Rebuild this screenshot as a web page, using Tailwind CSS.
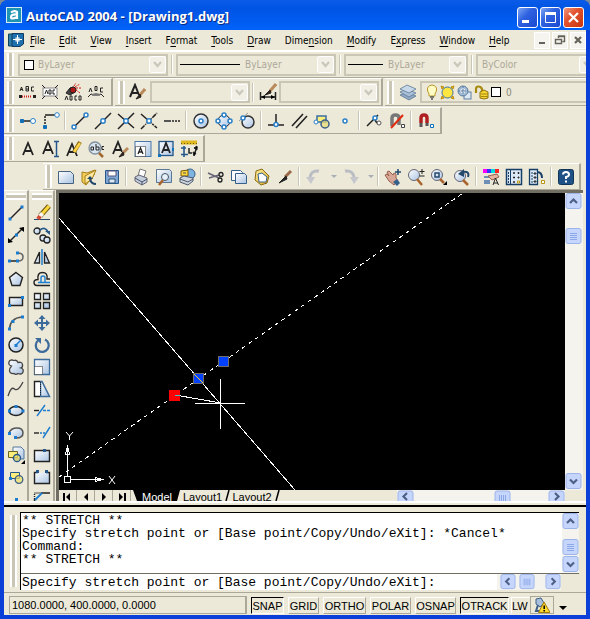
<!DOCTYPE html>
<html lang="en">

<head>
    <meta charset="UTF-8">
    <meta name="viewport" content="width=device-width, initial-scale=1.0">
    <script src="https://cdn.jsdelivr.net/npm/@tailwindcss/browser@4"></script>
    <title>AutoCAD 2004 - [Drawing1.dwg]</title>
</head>

<body class="h-screen bg-[#7a8a9a] overflow-hidden font-['DejaVu_Sans_Condensed','DejaVu_Sans',sans-serif] text-[10px] text-black">
    <!-- shared gradients -->
    <svg class="absolute size-0" aria-hidden="true">
        <defs>
            <linearGradient id="pane" x1="0" y1="0" x2="1" y2="1">
                <stop offset="0" stop-color="#fff" />
                <stop offset="1" stop-color="#a9c3e2" />
            </linearGradient>
            <linearGradient id="gold" x1="0" y1="0" x2="1" y2="1">
                <stop offset="0" stop-color="#fff3a0" />
                <stop offset="1" stop-color="#d9a51c" />
            </linearGradient>
        </defs>
    </svg>

    <div class="h-full flex flex-col rounded-t-lg overflow-hidden bg-[#0a3fd8]">
        <!-- title bar -->
        <header class="h-[30px] shrink-0 flex items-center pl-[6px] pr-[6px] bg-linear-to-b from-[#0a5be8] from-0% via-[#0054e3] via-30% to-[#0062fa]">
            <svg class="size-4 shrink-0" viewBox="0 0 16 16">
                <rect x=".5" y=".5" width="15" height="15" fill="#1f93b4" stroke="#d8eef5" />
                <path d="M5 5.5Q8 3 11 5v7M11 7.5Q5 7 5 10T11 10" fill="none" stroke="#fff" stroke-width="2.2" />
            </svg>
            <h1 class="flex-1 pl-1 pt-[3px] text-[13px] font-bold text-white whitespace-nowrap font-['Open_Sans',sans-serif] [text-shadow:1px_1px_#0a2a80]">AutoCAD 2004 - [Drawing1.dwg]</h1>
            <div class="flex gap-[2px] mt-1 [&>button]:size-[21px] [&>button]:rounded-[3px] [&>button]:border [&>button]:border-white">
                <button aria-label="Minimize" class="bg-linear-to-br from-[#7ea4f4] via-[#2f62e0] via-40% to-[#1a48d0]"><svg viewBox="0 0 19 19"><path d="M4 13.5h7" stroke="#fff" stroke-width="3" /></svg></button>
                <button aria-label="Maximize" class="bg-linear-to-br from-[#7ea4f4] via-[#2f62e0] via-40% to-[#1a48d0]"><svg viewBox="0 0 19 19"><path d="M4.500 5v9.500h10V5" stroke="#fff" fill="none" /><path d="M4 5.500h11" stroke="#fff" stroke-width="3" /></svg></button>
                <button aria-label="Close" class="bg-linear-to-br from-[#f0967c] via-[#e2532e] via-40% to-[#c9340e]"><svg viewBox="0 0 19 19"><path d="M5 5l9 9M14 5l-9 9" stroke="#fff" stroke-width="2.2" /></svg></button>
            </div>
        </header>

        <div class="flex-1 min-h-0 mx-1 mb-1 flex flex-col bg-[#ece9d8]">
            <!-- menu -->
            <nav class="h-5 shrink-0 flex items-center pl-1">
                <svg class="size-4 shrink-0 mr-[6px]" viewBox="0 0 16 16">
                    <path d="M.5 2h4v12h-4z" fill="#2d7fa8" stroke="#11405c" />
                    <path d="M4 1.500h11.500V12L12 14.500H4z" fill="#1d6fae" stroke="#123b63" />
                    <path d="M9.500 3v9M5 7.500h9" stroke="#fff" /><rect x="8" y="6" width="3" height="3" fill="none" stroke="#fff" />
                </svg>
                <div class="flex gap-[14px] [&_u]:underline-offset-2 whitespace-nowrap">
                    <a href="#"><u>F</u>ile</a><a href="#"><u>E</u>dit</a><a href="#"><u>V</u>iew</a><a href="#"><u>I</u>nsert</a><a href="#">F<u>o</u>rmat</a><a href="#"><u>T</u>ools</a><a href="#"><u>D</u>raw</a><a href="#">Dime<u>n</u>sion</a><a href="#"><u>M</u>odify</a><a href="#">E<u>x</u>press</a><a href="#"><u>W</u>indow</a><a href="#"><u>H</u>elp</a>
                </div>
                <div class="ml-auto flex gap-[2px] [&>button]:w-4 [&>button]:h-[17px] [&>button]:bg-[#f5f4ee] [&>button]:border [&>button]:border-[#fff] [&_svg]:size-[14px] stroke-[#66645a] fill-none">
                    <button aria-label="Minimize drawing"><svg viewBox="0 0 14 14"><path d="M4 10h6" stroke-width="2" /></svg></button>
                    <button aria-label="Restore drawing"><svg viewBox="0 0 14 14"><path d="M5.500 5V3.500h6v5H9.500M2.500 6.500h6v4h-6zM5 3h7M2 6.500h7" stroke-width="1.400" /></svg></button>
                    <button aria-label="Close drawing"><svg viewBox="0 0 14 14"><path d="M4 4l6 6M10 4l-6 6" stroke-width="2.200" /></svg></button>
                </div>
            </nav>

            <!-- properties row -->
            <div class="h-[28px] shrink-0 flex items-center gap-[3px] pl-[3px] border-t-2 border-t-white overflow-hidden text-[#aca899] border-b border-b-[#aca899]">
                <i class="w-[7px] h-[23px] shrink-0 border-x-2 border-[#fff] bg-[#c9c6b6] mr-[1px]"></i>
                <label class="w-[150px] h-[22px] shrink-0 flex items-center pl-1 border-2 border-[#c9c6b6]">
                    <span class="size-[10px] bg-white border border-black"></span>
                    <select aria-label="Color" disabled class="flex-1 min-w-0 appearance-none pl-1 text-[#aca899]"><option>ByLayer</option></select>
                    <svg class="size-[17px]" viewBox="0 0 17 17"><rect x=".5" y=".5" width="16" height="16" rx="2" fill="#f2f0e6" stroke="#fff" /><path d="M5 6l3.500 4L12 6" fill="none" stroke="#c9c7ba" stroke-width="2.200" /></svg>
                </label>
                <i class="w-[2px] h-[19px] shrink-0 border-l border-[#c9c6b6] bg-white"></i>
                <label class="w-[160px] h-[22px] shrink-0 flex items-center pl-[2px] border-2 border-[#c9c6b6]">
                    <span class="w-[60px] h-px bg-black"></span>
                    <select aria-label="Linetype" disabled class="flex-1 min-w-0 appearance-none pl-[5px] text-[#aca899]"><option>ByLayer</option></select>
                    <svg class="size-[17px]" viewBox="0 0 17 17"><rect x=".5" y=".5" width="16" height="16" rx="2" fill="#f2f0e6" stroke="#fff" /><path d="M5 6l3.500 4L12 6" fill="none" stroke="#c9c7ba" stroke-width="2.200" /></svg>
                </label>
                <i class="w-[2px] h-[19px] shrink-0 border-l border-[#c9c6b6] bg-white"></i>
                <label class="w-[124px] h-[22px] shrink-0 flex items-center pl-[2px] border-2 border-[#c9c6b6]">
                    <span class="w-[35px] h-px bg-black"></span>
                    <select aria-label="Lineweight" disabled class="flex-1 min-w-0 appearance-none pl-[5px] text-[#aca899]"><option>ByLayer</option></select>
                    <svg class="size-[17px]" viewBox="0 0 17 17"><rect x=".5" y=".5" width="16" height="16" rx="2" fill="#f2f0e6" stroke="#fff" /><path d="M5 6l3.500 4L12 6" fill="none" stroke="#c9c7ba" stroke-width="2.200" /></svg>
                </label>
                <i class="w-[2px] h-[19px] shrink-0 border-l border-[#c9c6b6] bg-white"></i>
                <label class="w-[122px] h-[22px] shrink-0 flex items-center pl-1 border-2 border-[#c9c6b6]">
                    <select aria-label="Plot style" disabled class="flex-1 min-w-0 appearance-none text-[#aca899]"><option>ByColor</option></select>
                    <svg class="size-[17px]" viewBox="0 0 17 17"><rect x=".5" y=".5" width="16" height="16" rx="2" fill="#f2f0e6" stroke="#fff" /><path d="M5 6l3.500 4L12 6" fill="none" stroke="#c9c7ba" stroke-width="2.200" /></svg>
                </label>
            </div>

            <!-- text, styles and layers row -->
            <div class="h-[28px] shrink-0 flex overflow-hidden [&_button]:w-[23px] [&_button]:h-[22px] [&_button]:shrink-0 [&_button]:grid [&_button]:place-items-center [&_button>svg]:size-[18px] fill-none stroke-[#222]">
                <div class="w-[109px] shrink-0 flex items-center pl-[3px] border-t border-t-white border-r-2 border-b border-[#aca899]">
                    <i class="w-[7px] h-[23px] border-x-2 border-[#fff] bg-[#c9c6b6] mr-[1px]"></i>
                    <button aria-label="Arc aligned text"><svg viewBox="0 0 18 18"><path d="M2 8l1.500-4L5 8M8 3.500v4.500h2.500V3.500zM8 6h2M16 4h-2.500v4H16M2.500 6.500h2" /><path d="M4 13.500h10" stroke="#d02020" stroke-width="2" stroke-dasharray="1 1" /><path d="M1 13.500h3M15 13.500h3" stroke-width="3" /></svg></button>
                    <button aria-label="Text mask"><svg viewBox="0 0 18 18"><rect x="2" y="5" width="14" height="8" fill="#fff" stroke="#888" /><path d="M1 2l3 3M17 2l-3 3M1 16l3-3M17 16l-3-3M4 11l1.500-4L7 11M8 7v4h2V7zM14 7h-2v4h2" /></svg></button>
                    <button aria-label="Explode text"><svg viewBox="0 0 18 18"><path d="M2 10l4-5 4-1 1 5-5 3z" fill="#444" /><circle cx="9" cy="7" r="3" fill="#b01818" /><path d="M11 4l5-3M12 5l5 0M12 7l4 3M10 3l2-3" stroke="#d42010" stroke-dasharray="2 1" /><path d="M1 17l1.500-4L4 17M6 13v4h2v-4zM13 13h-2v4h2M15 13v4h2v-4z" /></svg></button>
                    <button aria-label="Text fit"><svg viewBox="0 0 18 18"><path d="M2 9l1.500-4L5 9M8 3.500v4h2v-4zM16 5h-2.500v4H16M1 14l3-3 3 1h4l3-1 3 3" /><path d="M5 12l4-1 4 1" stroke="#777" stroke-width="2" /></svg></button>
                </div>
                <div class="w-[268px] shrink-0 ml-[2px] flex items-center pl-[3px] border-t border-t-white border-r-2 border-b border-[#aca899]">
                    <i class="w-[7px] h-[23px] shrink-0 border-x-2 border-[#fff] bg-[#c9c6b6]"></i>
                    <button aria-label="Text style"><svg viewBox="0 0 18 18"><path d="M2 14L7 2l4 10M4 10h6" stroke-width="2" /><path d="M17 6l-5 6" stroke="#b98a5a" stroke-width="3" /><path d="M12 11l-4 5 5-2z" fill="#3a2010" /></svg></button>
                    <label class="w-[100px] h-[22px] shrink-0 ml-[2px] flex items-center justify-end border-2 border-[#c9c6b6]">
                        <select aria-label="Text style name" disabled class="flex-1 min-w-0 appearance-none"></select>
                        <svg class="size-[17px]" viewBox="0 0 17 17"><rect x=".5" y=".5" width="16" height="16" rx="2" fill="#f2f0e6" stroke="#fff" /><path d="M5 6l3.500 4L12 6" stroke="#c9c7ba" stroke-width="2.200" /></svg>
                    </label>
                    <i class="w-[2px] h-[19px] shrink-0 mx-[2px] border-l border-[#c9c6b6] bg-white"></i>
                    <button aria-label="Dimension style"><svg viewBox="0 0 18 18"><path d="M1.500 9v8M16.500 9v8M2 14h14" stroke-width="1.500" /><path d="M2 14l4-2v4zM16 14l-4-2v4z" fill="#000" stroke="none" /><path d="M17 1l-6 7" stroke="#b98a5a" stroke-width="3" /><path d="M11 7l-5 5 6-2z" fill="#3a2010" /></svg></button>
                    <label class="w-[100px] h-[22px] shrink-0 flex items-center justify-end border-2 border-[#c9c6b6]">
                        <select aria-label="Dimension style name" disabled class="flex-1 min-w-0 appearance-none"></select>
                        <svg class="size-[17px]" viewBox="0 0 17 17"><rect x=".5" y=".5" width="16" height="16" rx="2" fill="#f2f0e6" stroke="#fff" /><path d="M5 6l3.500 4L12 6" stroke="#c9c7ba" stroke-width="2.200" /></svg>
                    </label>
                </div>
                <div class="flex-1 ml-[2px] flex items-center pl-[2px] border-t border-t-white border-b border-[#aca899]">
                    <i class="w-[7px] h-[23px] shrink-0 border-x-2 border-[#fff] bg-[#c9c6b6] mr-[2px]"></i>
                    <button aria-label="Layers"><svg viewBox="0 0 18 18" stroke="#5d7896" stroke-width=".8"><path d="M1 12l7-3 9 4-7 4z" fill="#8fa9c4" /><path d="M1 9l7-3 9 4-7 4z" fill="#a9c0d8" /><path d="M1 6l7-4 9 4-7 4z" fill="#c7d8e8" /></svg></button>
                    <div class="flex-1 h-[22px] ml-px flex items-center gap-[2px] pl-1 border-2 border-r-0 border-[#c9c6b6] text-[#8a877a]">
                        <svg class="w-[12px] h-4" viewBox="0 0 12 16"><path d="M3 10Q1 7 1.500 4 3 1 6 1t4.500 3Q11 7 9 10v2H3z" fill="#fffbc4" stroke="#b89a28" /><path d="M4 13h4M5 15h2" stroke="#555" stroke-width="1.500" /></svg>
                        <svg class="size-[15px]" viewBox="0 0 15 15"><path d="M1 1l3 1-2 2zM14 1l-3 1 2 2zM1 14l3-1-2-2zM14 14l-3-1 2-2z" fill="#e0b020" stroke="#c09010" /><circle cx="7.500" cy="7.500" r="5.500" fill="#ffe640" stroke="#3f6f9c" /></svg>
                        <svg class="size-[15px]" viewBox="0 0 15 15"><rect x="7" y="7" width="7" height="7" fill="#dce8f2" stroke="#5c7fa6" /><circle cx="6" cy="6" r="5" fill="#a5bdd4" stroke="#5c7fa6" /><circle cx="6" cy="6" r="2" stroke="#fff" /><path d="M6 1v10M1 6h10" stroke="#5c7fa6" stroke-dasharray="2 1" /></svg>
                        <svg class="size-[15px]" viewBox="0 0 15 15"><path d="M2 8V4Q2 1.500 4.500 1.500T8 4v3" stroke="#a88a10" stroke-width="2.200" /><path d="M6 7l4-2 4 2v6l-4 1-4-1z" fill="#f5d431" stroke="#8c7210" /><path d="M7 9h7M7 11.500h7" stroke="#a88a10" /></svg>
                        <span class="size-[10px] bg-white border border-black"></span>
                        <span class="ml-[3px]">0</span>
                    </div>
                </div>
            </div>

            <!-- object snap row -->
            <div class="h-[27px] mt-px shrink-0 w-[438px] max-w-full flex items-center pl-[3px] border-t border-t-white border-r-2 border-b border-[#aca899] [&_button]:w-[23px] [&_button]:h-[23px] [&_button]:shrink-0 [&_button]:grid [&_button]:place-items-center [&_svg]:size-[18px] [&>s]:w-[2px] [&>s]:h-[19px] [&>s]:mx-[2px] [&>s]:border-l [&>s]:border-[#c9c6b6] [&>s]:bg-white fill-none stroke-[#222]">
                <i class="w-[7px] h-[23px] border-x-2 border-[#fff] bg-[#c9c6b6] mr-[2px]"></i>
                <button aria-label="Temporary track point"><svg viewBox="0 0 18 18"><path d="M3 9h10" stroke="#555" stroke-width="2" /><path d="M1.500 7.500h3v3h-3z" fill="#1270b8" stroke="#1270b8" /><circle cx="14" cy="9" r="2.500" fill="#fff" stroke="#2a80c8" /></svg></button>
                <button aria-label="Snap from"><svg viewBox="0 0 18 18"><path d="M3 3h10" stroke-width="1.500" /><path d="M3 4v9" stroke-width="1.500" stroke-dasharray="2 1" /><path d="M1.500 13.500h3v3h-3z" fill="#1270b8" stroke="#1270b8" /><circle cx="15" cy="3" r="2.300" fill="#fff" stroke="#2a80c8" /></svg></button>
                <s></s>
                <button aria-label="Endpoint"><svg viewBox="0 0 18 18"><path d="M3 15L15 3" stroke-width="1.500" /><g fill="#fff" stroke="#2a80c8" stroke-width="1.500"><circle cx="3" cy="15" r="2" /><circle cx="15" cy="3" r="2" /></g></svg></button>
                <button aria-label="Midpoint"><svg viewBox="0 0 18 18"><path d="M1 17L17 1" stroke-width="1.500" /><circle cx="9" cy="9" r="2.200" fill="#fff" stroke="#2a80c8" stroke-width="1.500" /></svg></button>
                <button aria-label="Intersection"><svg viewBox="0 0 18 18"><path d="M1 2l16 14M1 17L17 1" stroke-width="1.500" /><circle cx="9" cy="9" r="2.200" fill="#fff" stroke="#2a80c8" stroke-width="1.500" /></svg></button>
                <button aria-label="Apparent intersection"><svg viewBox="0 0 18 18"><path d="M1 2l16 14" stroke-width="1.500" stroke-dasharray="14 1 2 1" /><path d="M1 17L17 1" stroke-width="1.500" stroke-dasharray="5 1 1 1" /><circle cx="9" cy="9" r="2.200" fill="#fff" stroke="#2a80c8" stroke-width="1.500" /></svg></button>
                <button aria-label="Extension"><svg viewBox="0 0 18 18"><path d="M1 9h7" stroke="#555" stroke-width="2" /><path d="M9 9h8" stroke-width="1.500" stroke-dasharray="2 1" /></svg></button>
                <s></s>
                <button aria-label="Center"><svg viewBox="0 0 18 18"><circle cx="9" cy="9" r="7" fill="url(#pane)" stroke="#333" stroke-width="1.500" /><circle cx="9" cy="9" r="2" fill="#fff" stroke="#2a80c8" stroke-width="1.500" /></svg></button>
                <button aria-label="Quadrant"><svg viewBox="0 0 18 18"><circle cx="9" cy="9" r="6" fill="url(#pane)" /><g fill="#fff" stroke="#2a80c8" stroke-width="1.500"><circle cx="9" cy="3" r="2" /><circle cx="9" cy="15" r="2" /><circle cx="3" cy="9" r="2" /><circle cx="15" cy="9" r="2" /></g></svg></button>
                <button aria-label="Tangent"><svg viewBox="0 0 18 18"><circle cx="10" cy="10" r="6" fill="url(#pane)" stroke="#333" stroke-width="1.500" /><path d="M1 9l9-8" stroke="#999" /><circle cx="5" cy="6" r="2" fill="#fff" stroke="#2a80c8" stroke-width="1.500" /></svg></button>
                <s></s>
                <button aria-label="Perpendicular"><svg viewBox="0 0 18 18"><path d="M1 13h16M9 2v11" stroke-width="1.500" /><circle cx="9" cy="12.500" r="2" fill="#fff" stroke="#2a80c8" stroke-width="1.500" /></svg></button>
                <button aria-label="Parallel"><svg viewBox="0 0 18 18"><path d="M2 14L13 2M6 16L17 4" stroke-width="1.600" /></svg></button>
                <button aria-label="Insert"><svg viewBox="0 0 18 18"><path d="M4 4h9v6H4z" fill="#fbee7a" stroke="#3a6ea5" stroke-width="1.500" /><circle cx="12" cy="12" r="4" fill="#e8dc70" fill-opacity=".7" stroke="#3b5f86" stroke-width="1.500" /><circle cx="3" cy="10" r="2" fill="#fff" stroke="#2a80c8" /></svg></button>
                <button aria-label="Node"><svg viewBox="0 0 18 18"><circle cx="9" cy="9" r="2" fill="#fff" stroke="#2a80c8" stroke-width="1.500" /></svg></button>
                <s></s>
                <button aria-label="Nearest"><svg viewBox="0 0 18 18"><path d="M2 14L13 3M10 6q0 5 5 6" stroke-width="1.500" /><circle cx="10" cy="6" r="2" fill="#fff" stroke="#2a80c8" stroke-width="1.500" /><circle cx="14" cy="11" r="2" fill="#fff" stroke="#555" /></svg></button>
                <button aria-label="No snap"><svg viewBox="0 0 18 18"><path d="M4 14V6q0-3 3.500-3T11 6v7" stroke="#777" stroke-width="3.500" /><path d="M3 16L15 3" stroke="#e02a10" stroke-width="2" /><path d="M13.500 12.500h3v3h-3z" fill="#fff" stroke="#444" /></svg></button>
                <s></s>
                <button aria-label="Snap settings"><svg viewBox="0 0 18 18"><path d="M4 11V6q0-3 3-3t3 3v5" stroke="#b02020" stroke-width="3.500" /><path d="M4 11v4M10 11v3" stroke="#555" stroke-width="3" /><path d="M13.500 12.500h3v3h-3z" fill="#fff" stroke="#1270b8" /></svg></button>
            </div>

            <!-- text row -->
            <div class="h-[27px] mt-px shrink-0 w-[201px] flex items-center pl-[3px] border-t border-t-white border-r-2 border-b border-[#aca899] [&_button]:w-[23px] [&_button]:h-[23px] [&_button]:shrink-0 [&_button]:grid [&_button]:place-items-center [&_svg]:size-[18px] fill-none stroke-[#222]">
                <i class="w-[7px] h-[23px] border-x-2 border-[#fff] bg-[#c9c6b6] mr-[2px]"></i>
                <button aria-label="Multiline text"><svg viewBox="0 0 18 18"><path d="M4 15L9 3l5 12M6 11h6" stroke-width="1.800" /></svg></button>
                <button aria-label="Single line text"><svg viewBox="0 0 18 18"><path d="M1 14L6 2l5 12M3 10h6" stroke-width="1.800" /><path d="M14.500 2v14M12 1.500h5M12 16.500h5" stroke="#24588c" stroke-width="1.500" /></svg></button>
                <button aria-label="Edit text"><svg viewBox="0 0 18 18"><path d="M2 16L7 4l5 12M4 12h6" stroke-width="1.800" /><path d="M15 2L9 12" stroke="#8a6410" stroke-width="4" /><path d="M15 3L9 12" stroke="#ffd447" stroke-width="2.500" /></svg></button>
                <button aria-label="Find text"><svg viewBox="0 0 18 18"><circle cx="7" cy="8" r="6" fill="#d9e6f1" stroke="#8090a0" stroke-width="1.300" /><path d="M11 13l4 4" stroke="#a06830" stroke-width="2.500" /><path d="M3 7h2.500v3H3zM8 4v6h3V7H8M16 6.500h-2v3h2" /></svg></button>
                <button aria-label="Text style"><svg viewBox="0 0 18 18"><path d="M2 14L7 2l4 10M4 10h6" stroke-width="1.800" /><path d="M17 8l-5 5" stroke="#b98a5a" stroke-width="3" /><path d="M12 12l-4 5 5-2z" fill="#3a2010" /></svg></button>
                <button aria-label="Scale text"><svg viewBox="0 0 18 18"><rect x="1" y="1.500" width="16" height="15" fill="url(#pane)" stroke="#4a78ab" /><path d="M1.500 6.500h10v10h-10z" fill="#fff" stroke-dasharray="1 1" /><path d="M4 14l2.500-6L9 14M5 12h3" stroke-width="1.300" /></svg></button>
                <button aria-label="Justify text"><svg viewBox="0 0 18 18"><rect x="2" y="1.500" width="14" height="14" fill="url(#pane)" stroke="#24588c" stroke-width="1.300" /><path d="M5 13L9 3l4 10M6 10h6" stroke-width="1.800" /><path d="M1 14h3v3H1zM15 8h2v3h-2z" fill="#1270b8" stroke="none" /></svg></button>
                <button aria-label="Convert distance"><svg viewBox="0 0 18 18"><path d="M1 2.500h16" stroke="#e0b820" stroke-width="4" /><path d="M1 3.500h16" stroke="#705808" stroke-dasharray="1 2" /><path d="M4 6v11M1 14.500h7M1 8h5" stroke="#24588c" stroke-width="1.600" /><path d="M9 8v5h3M17 7l-3 8" stroke-width="1.500" /><path d="M14 16l-1-4 3 1zM17 6l-3 2 3 2z" fill="#000" /></svg></button>
            </div>

            <!-- standard row -->
            <div class="h-[27px] mt-px ml-[39px] mr-[5px] shrink-0 flex items-center pl-[2px] overflow-hidden border-t border-t-white border-r-2 border-b border-[#aca899] [&_button]:w-[23px] [&_button]:h-[23px] [&_button]:shrink-0 [&_button]:grid [&_button]:place-items-center [&_svg]:size-[18px] [&>s]:w-[2px] [&>s]:h-[19px] [&>s]:shrink-0 [&>s]:mx-[2px] [&>s]:border-l [&>s]:border-[#c9c6b6] [&>s]:bg-white fill-none stroke-[#222]">
                <i class="w-[7px] h-[23px] shrink-0 border-x-2 border-[#fff] bg-[#c9c6b6] mr-[2px]"></i>
                <button aria-label="New"><svg viewBox="0 0 18 18"><path d="M1.500 3.500h12l3 3v9h-15z" fill="url(#pane)" stroke="#46627e" /></svg></button>
                <button aria-label="Open"><svg viewBox="0 0 18 18"><path d="M2 4l5 1 8-3-1 5-8 10-4-3z" fill="#f3cf5a" stroke="#a87f18" /><path d="M5 8l11-6-4 9-7 5z" fill="#fbe9a0" stroke="#a87f18" /><path d="M16 16q-5 0-6-5" stroke="#24486c" stroke-width="2" /><path d="M7 11l3-3 3 3z" fill="#24486c" stroke="none" /></svg></button>
                <button aria-label="Save"><svg viewBox="0 0 18 18"><path d="M2.500 2.500h13v13h-13z" fill="#7fa6d4" stroke="#24588c" /><path d="M5 3h8v5H5z" fill="#fff" stroke="#557" /><path d="M6 11h6v4H6z" fill="#dce8f5" stroke="#357" /></svg></button>
                <s></s>
                <button aria-label="Plot"><svg viewBox="0 0 18 18" stroke="#555"><path d="M6 8L8 1l6 2-2 6z" fill="#fff" stroke="#777" /><path d="M3 9l4-2 8 3v4l-5 3-7-4z" fill="#c4cedd" stroke="#667" /><path d="M3 10l7 4 5-3M10 14v3" stroke="#47526a" /></svg></button>
                <button aria-label="Plot preview"><svg viewBox="0 0 18 18"><path d="M1.500 1.500h13l2 2v11h-15z" fill="url(#pane)" stroke="#5a7894" /><circle cx="10" cy="9" r="3.500" fill="#e6f0fa" stroke="#456" /><path d="M8 12l-4 5" stroke="#a8642c" stroke-width="2.500" /></svg></button>
                <button aria-label="Publish"><svg viewBox="0 0 18 18"><circle cx="12" cy="6" r="5" fill="#7fb3e0" stroke="#35608c" /><path d="M3 3l7-1v6H3z" fill="#ffd83c" stroke="#7a5c08" /><path d="M2 10l4-2 9 2v3l-5 4-8-3z" fill="#cfd6df" stroke="#4b5668" /><path d="M5 5h3M2 11l8 3 5-3" stroke="#4b5668" /></svg></button>
                <s></s>
                <button aria-label="Cut"><svg viewBox="0 0 18 18"><path d="M1 5l11 5M2 10l10-3" stroke="#667" stroke-width="1.500" /><circle cx="14" cy="6.500" r="2" stroke-width="1.300" /><circle cx="13" cy="12" r="2" stroke-width="1.300" /></svg></button>
                <button aria-label="Copy"><svg viewBox="0 0 18 18"><path d="M1.500 2.500h9l2 2v8h-11z" fill="#fff" stroke="#35608c" /><path d="M5.500 5.500h9l2 2v8h-11z" fill="url(#pane)" stroke="#35608c" /></svg></button>
                <button aria-label="Paste"><svg viewBox="0 0 18 18"><path d="M3 3l6-2 7 7-2 7-6 2-6-5z" fill="url(#gold)" stroke="#8a6a14" /><path d="M5 6l4-1 5 4-1 5H6z" fill="#fff" stroke="#35608c" /></svg></button>
                <button aria-label="Match properties"><svg viewBox="0 0 18 18"><path d="M15 3L9 9" stroke="#9a6a4a" stroke-width="3" /><path d="M10 8l-7 7 8-4z" fill="#222" /></svg></button>
                <s></s>
                <button aria-label="Undo"><svg viewBox="0 0 18 18"><path d="M14 3Q5 2 5 11" stroke="#b9bcc2" stroke-width="3" /><path d="M1 9l5 7 4-7z" fill="#c5c7cc" stroke="none" /></svg></button>
                <button aria-label="Undo list" class="max-w-[14px]"><svg viewBox="0 0 18 18"><path d="M6 7h6l-3 3z" fill="#a9adb4" stroke="none" /></svg></button>
                <button aria-label="Redo"><svg viewBox="0 0 18 18"><path d="M3 3q9-1 9 8" stroke="#b9bcc2" stroke-width="3" /><path d="M8 9l4 7 5-7z" fill="#c5c7cc" stroke="none" /></svg></button>
                <button aria-label="Redo list" class="max-w-[13px]"><svg viewBox="0 0 18 18"><path d="M6 7h6l-3 3z" fill="#a9adb4" stroke="none" /></svg></button>
                <s></s>
                <button aria-label="Pan"><svg viewBox="0 0 18 18"><path d="M1 7l2-1 2 2-2-4 2-1 4 4 1-2 2 1v4l2 3-4 4-5-4z" fill="#d9a796" stroke="#96604c" /><path d="M9 14l4-3 3 4-3 3z" fill="#35608c" stroke="none" /><path d="M14 1v6M11 4h6" stroke="#24486c" stroke-width="1.500" /></svg></button>
                <button aria-label="Zoom realtime"><svg viewBox="0 0 18 18"><circle cx="7" cy="7" r="5.500" fill="url(#pane)" stroke="#667" /><path d="M10 11l5 6" stroke="#a8642c" stroke-width="2.500" /><path d="M15 1v5M12.500 3.500h5M12.500 8h5" /></svg></button>
                <button aria-label="Zoom window"><svg viewBox="0 0 18 18"><circle cx="7" cy="7" r="5.500" fill="url(#pane)" stroke="#667" /><path d="M5 5h4v4H5z" stroke="#24486c" stroke-width="1.500" /><path d="M10 11l4 4" stroke="#a8642c" stroke-width="2.500" /><path d="M17 13v4h-4z" fill="#000" stroke="none" /></svg></button>
                <button aria-label="Zoom previous"><svg viewBox="0 0 18 18"><circle cx="7" cy="8" r="5.500" fill="url(#pane)" stroke="#667" /><path d="M10 12l5 5" stroke="#a8642c" stroke-width="2.500" /><path d="M15 9q2-6-5-5" stroke="#24486c" stroke-width="2" /><path d="M5 6l6-5v8z" fill="#24486c" stroke="none" /></svg></button>
                <s></s>
                <button aria-label="Properties"><svg viewBox="0 0 18 18"><g stroke="none"><path d="M1 1h4v4H1z" fill="#f0f" /><path d="M5 1h4v4H5z" fill="#33f" /><path d="M9 1h4v4H9z" fill="#0dd" /><path d="M13 1h4v4h-4z" fill="#f22" /><path d="M2 8h6v2H2zM2 12h6v4H2z" fill="#6d8fb5" /></g><path d="M6 8l9-2 2 3-7 3z" fill="#e5b3a0" stroke="#96604c" /><path d="M11 17l2.500-7 3 7M12 15h4" /></svg></button>
                <button aria-label="DesignCenter"><svg viewBox="0 0 18 18"><path d="M1.500 1.500h15v15h-15z" fill="#dceaf8" stroke="#173f66" stroke-width="1.500" /><path d="M5.500 1v16" stroke="#173f66" /><path d="M3.500 4v11" stroke="#173f66" stroke-dasharray="2 1" /><path d="M8.500 4.500h1v1h-1zM13 4.500h1v1h-1zM8.500 9h1v1h-1zM13 9h1v1h-1zM8.500 13.500h1v1h-1z" /><path d="M12.500 13h2v2h-2z" stroke="#c4a010" /></svg></button>
                <button aria-label="Tool palettes"><svg viewBox="0 0 18 18"><path d="M1.500 1.500h8v15h-8z" fill="#dceaf8" stroke="#173f66" stroke-width="1.300" /><path d="M4 4v11" stroke="#173f66" stroke-dasharray="2 1" /><path d="M6 5h2v1H6zM6 9h2v1H6zM6 13h2v1H6z" /><path d="M9 4q5 0 5 6" stroke="#173f66" stroke-width="2" /><path d="M13.500 12.500h3v3h-3z" fill="#fff" stroke="#b89210" /></svg></button>
                <s></s>
                <button aria-label="Help"><svg viewBox="0 0 18 18"><rect x="1.500" y="1.500" width="15" height="15" rx="2" fill="#1e5286" stroke="#123456" /><path d="M6 6.500Q6 4 9 4t3 2.500Q12 8.500 9 9v2M9 12.500v2" stroke="#fff" stroke-width="2" /></svg></button>
            </div>

            <!-- drawing area with side toolbars -->
            <main class="flex-1 min-h-0 flex overflow-hidden border-b-2 border-white">
                <div class="w-[25px] shrink-0 overflow-hidden flex flex-col items-center border-t border-t-white border-r-2 border-[#aca899] [&>button]:w-[23px] [&>button]:h-[22px] [&>button]:shrink-0 [&>button]:grid [&>button]:place-items-center [&_svg]:size-[18px] fill-none stroke-[#222]">
                    <i class="w-[20px] h-[7px] shrink-0 my-[2px] border-y-2 border-[#fff] bg-[#c9c6b6]"></i>
                    <button aria-label="Line"><svg viewBox="0 0 18 18"><path d="M3 15L15 3" stroke-width="1.500" /><path d="M1.500 13.500h3v3h-3zM13.500 1.500h3v3h-3z" fill="#1c7cd0" stroke="none" /></svg></button>
                    <button aria-label="Construction line"><svg viewBox="0 0 18 18"><path d="M2 16L16 2" stroke-width="1.500" /><path d="M1 17v-5l5 4zM17 1v5l-5-4z" fill="#000" stroke="none" /><path d="M8 7.500h3v3H8z" fill="#1c7cd0" stroke="none" /></svg></button>
                    <button aria-label="Polyline"><svg viewBox="0 0 18 18"><path d="M2 13h8" stroke-width="1.500" /><path d="M11 5q5 0 5 4t-5 4" stroke="#666" stroke-width="1.500" /><path d="M1 11.500h3v3H1zM9 11.500h3v3H9zM9 3.500h3v3H9z" fill="#1c7cd0" stroke="none" /></svg></button>
                    <button aria-label="Polygon"><svg viewBox="0 0 18 18"><path d="M9 2.500l6.500 5-2.500 8H5l-2.500-8z" fill="url(#pane)" stroke-width="1.400" /></svg></button>
                    <button aria-label="Rectangle"><svg viewBox="0 0 18 18"><path d="M2.500 5.500h13v8h-13z" fill="url(#pane)" stroke-width="1.400" /><path d="M1 12h3v3H1zM14 4h3v3h-3z" fill="#1c7cd0" stroke="none" /></svg></button>
                    <button aria-label="Arc"><svg viewBox="0 0 18 18"><path d="M2.500 15Q3 4 15 3" stroke="#555" stroke-width="1.500" /><path d="M1 13.500h3v3H1zM4.500 6h3v3h-3zM14 1.500h3v3h-3z" fill="#1c7cd0" stroke="none" /></svg></button>
                    <button aria-label="Circle"><svg viewBox="0 0 18 18"><circle cx="9" cy="9" r="7" fill="url(#pane)" stroke-width="1.500" /><path d="M9 9l5-5" stroke="#1c7cd0" stroke-width="1.500" /><path d="M7.500 8h3v3h-3z" fill="#1c7cd0" stroke="none" /></svg></button>
                    <button aria-label="Revision cloud"><svg viewBox="0 0 18 18"><path d="M4.500 8Q1 7 2 4t5-1.500q3-1 4 2 4-1 4.500 2T14 10q3 1 2 4t-5 1.500q-2 1.500-4 0-4 .5-4.500-2.500 0-3 2-5z" fill="url(#pane)" stroke="#444" stroke-width="1.300" /></svg></button>
                    <button aria-label="Spline"><svg viewBox="0 0 18 18"><path d="M1 16Q4 6 7.500 9T16 2" stroke="#444" stroke-width="1.300" /></svg></button>
                    <button aria-label="Ellipse"><svg viewBox="0 0 18 18"><ellipse cx="9" cy="9" rx="7" ry="4.500" fill="url(#pane)" stroke-width="1.500" /><path d="M1 7.500h3v3H1zM14.500 7.500h3v3h-3zM7.500 3h3v3h-3z" fill="#1c7cd0" stroke="none" /></svg></button>
                    <button aria-label="Ellipse arc"><svg viewBox="0 0 18 18"><path d="M2 9q2-5 8-5t6 5-7 5" fill="url(#pane)" stroke="#555" stroke-width="1.500" /><path d="M1 8h3v3H1zM7 12h3v3H7z" fill="#1c7cd0" stroke="none" /></svg></button>
                    <button aria-label="Insert block"><svg viewBox="0 0 18 18"><path d="M6 1h8l3 3v9H6z" fill="url(#pane)" stroke="#55799c" /><path d="M1.500 5.500h9v6h-9z" fill="#fbee7a" stroke="#6b6320" /><circle cx="10" cy="12" r="3.500" fill="#efe064" fill-opacity=".7" stroke="#24588c" stroke-width="1.300" /><path d="M18 14v4h-4z" fill="#000" stroke="none" /></svg></button>
                    <button aria-label="Make block"><svg viewBox="0 0 18 18"><path d="M3.500 4.500h9v6h-9z" fill="#fbee7a" stroke="#24588c" /><circle cx="12" cy="11.500" r="3.800" fill="#efe064" fill-opacity=".7" stroke="#3b5f86" stroke-width="1.300" /><path d="M2 9h3v3H2z" fill="#1c7cd0" stroke="none" /></svg></button>
                    <button aria-label="Point"><svg viewBox="0 0 18 18"><path d="M8 8h3v3H8z" fill="#1c7cd0" stroke="none" /></svg></button>
                </div>
                <div class="w-[25px] ml-px shrink-0 overflow-hidden flex flex-col items-center border-t border-t-white border-r-2 border-[#aca899] [&>button]:w-[23px] [&>button]:h-[22px] [&>button]:shrink-0 [&>button]:grid [&>button]:place-items-center [&_svg]:size-[18px] fill-none stroke-[#222]">
                    <i class="w-[20px] h-[7px] shrink-0 my-[2px] border-y-2 border-[#fff] bg-[#c9c6b6]"></i>
                    <button aria-label="Erase"><svg viewBox="0 0 18 18"><path d="M1 15.500h16" stroke="#24486c" /><path d="M16 2L7 12" stroke="#6f5510" stroke-width="5" /><path d="M16 2l-7 8" stroke="#fbd83c" stroke-width="3" /><path d="M9.500 9.500l-3 3" stroke="#f7f7f7" stroke-width="4" /><path d="M7 12l-2 3" stroke="#d24a32" stroke-width="4" /></svg></button>
                    <button aria-label="Copy object"><svg viewBox="0 0 18 18" stroke-width="1.300"><circle cx="4" cy="5" r="3" fill="url(#pane)" /><circle cx="10" cy="12" r="3" fill="url(#pane)" /><circle cx="14" cy="14" r="3" fill="url(#pane)" /><path d="M7 4q5-4 8 2" stroke="#24588c" stroke-width="1.800" /><path d="M12 5h5v4z" fill="#24588c" stroke="none" /></svg></button>
                    <button aria-label="Mirror"><svg viewBox="0 0 18 18"><path d="M6.500 4v11h-5zM11.500 4v11h5z" fill="url(#pane)" stroke-width="1.300" /><path d="M9 1v16" stroke="#1c7cd0" stroke-width="1.500" /></svg></button>
                    <button aria-label="Offset"><svg viewBox="0 0 18 18" stroke-width="1.400"><path d="M17 15.500H4q-3 0-3-3t4-3q-1-7 4.500-7T14 9h3" /><path d="M17 12.500H5M8 12V8q0-2 2-2t2 2v4" stroke="#1c7cd0" /></svg></button>
                    <button aria-label="Array"><svg viewBox="0 0 18 18"><path d="M1.500 1.500h6v6h-6zM10.500 1.500h6v6h-6zM1.500 10.500h6v6h-6zM10.500 10.500h6v6h-6z" fill="url(#pane)" stroke-width="1.300" /></svg></button>
                    <button aria-label="Move"><svg viewBox="0 0 18 18"><path d="M9 3v12M3 9h12" stroke="#3d6b9c" stroke-width="2" /><path d="M9 1L5.500 5h7zM9 17l-3.500-4h7zM1 9l4-3.500v7zM17 9l-4-3.500v7z" fill="#3d6b9c" stroke="none" /></svg></button>
                    <button aria-label="Rotate"><svg viewBox="0 0 18 18"><path d="M12 3.500a6.500 6.500 0 1 1-7 1" stroke="#3d6b9c" stroke-width="2.300" /><path d="M2 2h6v6z" fill="#3d6b9c" stroke="none" /></svg></button>
                    <button aria-label="Scale"><svg viewBox="0 0 18 18"><path d="M1.500 1.500h15v15h-15z" fill="url(#pane)" stroke="#3d6b9c" stroke-width="1.300" /><path d="M1.500 8.500h8v8h-8z" fill="#fff" stroke-dasharray="1 1" /></svg></button>
                    <button aria-label="Stretch"><svg viewBox="0 0 18 18"><path d="M7.500 1.500H9l7.500 15h-9z" fill="url(#pane)" stroke="#3d6b9c" stroke-width="1.500" /><path d="M7 1.500H1.500v15H7" fill="#fff" stroke-width="1.400" /><path d="M7.500 2v14" stroke-dasharray="1 1" /></svg></button>
                    <button aria-label="Trim"><svg viewBox="0 0 18 18" stroke-width="1.400"><path d="M1 8.500h5" /><path d="M4 14L12 3" stroke="#1c7cd0" /><path d="M10 8.500h7" stroke="#1c7cd0" stroke-dasharray="3 1" /></svg></button>
                    <button aria-label="Extend"><svg viewBox="0 0 18 18" stroke-width="1.400"><path d="M1 9h5" /><path d="M10 14l7-11" stroke="#1c7cd0" /><path d="M7 9h6" stroke="#1c7cd0" stroke-dasharray="2 1" /></svg></button>
                    <button aria-label="Break at point"><svg viewBox="0 0 18 18"><path d="M1.500 4.500h15v11h-15z" fill="url(#pane)" stroke-width="1.400" /><path d="M10 3h3v3h-3z" fill="#24588c" stroke="none" /></svg></button>
                    <button aria-label="Break"><svg viewBox="0 0 18 18"><path d="M5 4.500H1.500v11h15v-11H13" fill="url(#pane)" stroke-width="1.400" /><path d="M3 2h3v3H3zM12 2h3v3h-3z" fill="#24588c" stroke="none" /></svg></button>
                    <button aria-label="Chamfer"><svg viewBox="0 0 18 18" stroke-width="1.400"><path d="M8 3h9M1.500 9v8" /><path d="M1.500 9V3H8" stroke-dasharray="1 1" /><path d="M2 10l7-7" stroke="#1c7cd0" stroke-width="1.800" /></svg></button>
                </div>

                <div class="flex-1 min-w-0 ml-px mr-[3px] flex flex-col border-l-3 border-t-3 border-[#716f64]">
                    <div class="flex-1 min-h-0 flex">
                        <div class="flex-1 min-w-0 relative bg-black">
                            <svg class="absolute inset-0 size-full" fill="none" stroke="#fff" shape-rendering="crispEdges">
                                <path d="M0 25L236 297" />
                                <path d="M0 284L404 0" stroke-dasharray="4 4" />
                                <path d="M159.500 163.500h10v10h-10zM134.500 180.500h10v10h-10z" fill="#0040ff" stroke="#6d6d6d" />
                                <path d="M135 181l9 9" stroke="#ffd020" />
                                <path d="M110 197h11v11h-11z" fill="#f00" stroke="none" />
                                <path d="M116 202l46 8" />
                                <path d="M116 202h5" stroke="#3cc" />
                                <path d="M136 210.500h50M161.500 186v50" />
                                <!-- UCS icon -->
                                <path d="M5.500 283.500h6v6h-6zM8.500 283v-30M12 286.500h30M6.500 261.500l2-9 2 9zM36.500 284.500l7 2-7 2z" />
                                <path d="M7 239l3.500 4 3.500-4M10.500 243v4M50 283l6 8M56 283l-6 8" shape-rendering="auto" />
                            </svg>
                        </div>
                        <div class="w-[18px] shrink-0 flex flex-col bg-[#f4f3ee] [&_svg]:w-[17px] [&_svg]:block fill-none stroke-[#4d6185]">
                            <button aria-label="Scroll up"><svg viewBox="0 0 17 17"><rect x="1" y=".5" width="15" height="15" rx="2" fill="#c6d5fc" stroke="#9cb4ea" /><path d="M5 10l3.500-3.500L12 10" stroke-width="2.200" /></svg></button>
                            <svg class="mt-[18px]" viewBox="0 0 17 17"><rect x="1" y=".5" width="15" height="15" rx="2" fill="#c6d5fc" stroke="#9cb4ea" /><path d="M5 5.500h7M5 7.500h7M5 9.500h7M5 11.500h7" stroke="#8ba8e8" /></svg>
                            <button aria-label="Scroll down" class="mt-auto"><svg viewBox="0 0 17 17"><rect x="1" y=".5" width="15" height="15" rx="2" fill="#c6d5fc" stroke="#9cb4ea" /><path d="M5 6.500L8.500 10 12 6.500" stroke-width="2.200" /></svg></button>
                        </div>
                    </div>
                    <!-- layout tabs -->
                    <div class="h-[11px] shrink-0 flex overflow-hidden">
                        <div class="flex [&>button]:w-[18px] [&>button]:border-r [&>button]:border-[#aca899] [&_svg]:w-[17px] [&_svg]:h-[11px]">
                            <button aria-label="First tab"><svg viewBox="0 0 17 11"><path d="M4 3h2v8H4zM11 3v8L7 7z" /></svg></button>
                            <button aria-label="Previous tab"><svg viewBox="0 0 17 11"><path d="M11 3v8L7 7z" /></svg></button>
                            <button aria-label="Next tab"><svg viewBox="0 0 17 11"><path d="M7 3v8l4-4z" /></svg></button>
                            <button aria-label="Last tab"><svg viewBox="0 0 17 11"><path d="M6 3v8l4-4zM11 3h2v8h-2z" /></svg></button>
                        </div>
                        <div class="flex items-start [&_svg]:w-[6px] [&_svg]:h-[11px] [&_svg]:shrink-0 text-[11px] leading-[14px] font-['Liberation_Sans',Arial,sans-serif]">
                            <svg class="ml-[2px] bg-black" viewBox="0 0 6 11"><path d="M0 0l4 11H0z" fill="#ece9d8" /></svg>
                            <button class="w-[36px] bg-black text-white">Model</button>
                            <svg viewBox="0 0 6 11"><path d="M0 0h5L2 11H0z" /></svg>
                            <button class="w-[43px]">Layout1</button>
                            <svg viewBox="0 0 6 11" fill="none" stroke="#000" stroke-width="1.500"><path d="M5 0L2 11" /></svg>
                            <button class="w-[44px]">Layout2</button>
                            <svg viewBox="0 0 6 11" fill="none" stroke="#000" stroke-width="1.500"><path d="M5 0L2 11" /></svg>
                        </div>
                        <div class="w-[168px] ml-auto mr-[18px] flex overflow-hidden bg-[#f4f3ee] [&_svg]:w-[17px] [&_svg]:block fill-none stroke-[#4d6185]">
                            <button aria-label="Scroll left" class="h-[17px]"><svg viewBox="0 0 17 17"><rect x="1" y="1" width="15" height="15" rx="2" fill="#c6d5fc" stroke="#9cb4ea" /><path d="M10 3L6.500 6.500 10 10" stroke-width="2.200" /></svg></button>
                            <svg class="ml-auto h-[17px] shrink-0" viewBox="0 0 17 17"><rect x="1" y="1" width="15" height="15" rx="2" fill="#c6d5fc" stroke="#9cb4ea" /><path d="M5.500 5v7M7.500 5v7M9.500 5v7M11.500 5v7" stroke="#8ba8e8" /></svg>
                            <button aria-label="Scroll right" class="h-[17px] ml-[37px]"><svg viewBox="0 0 17 17"><rect x="1" y="1" width="15" height="15" rx="2" fill="#c6d5fc" stroke="#9cb4ea" /><path d="M7 3l3.500 3.500L7 10" stroke-width="2.200" /></svg></button>
                        </div>
                    </div>
                </div>
            </main>

            <!-- command window -->
            <section class="h-[87px] mt-[2px] shrink-0 flex pt-[5px] pl-[6px] pr-[7px] pb-[2px] border-t-2 border-black">
                <i class="w-[7px] h-[72px] mt-[3px] shrink-0 border-x-2 border-[#fff] bg-[#c9c6b6]"></i>
                <div class="flex-1 min-w-0 ml-[3px] flex flex-col border-t border-l border-black font-['Liberation_Mono','Courier_New',monospace] text-[13px] leading-[13px] whitespace-pre">
                    <div class="h-[61px] shrink-0 flex bg-white border-b border-[#716f64]">
                        <div class="flex-1 min-w-0 pl-px pt-px overflow-hidden">** STRETCH **
Specify stretch point or [Base point/Copy/Undo/eXit]: *Cancel*
Command:
** STRETCH **</div>
                        <div class="w-[17px] shrink-0 flex flex-col bg-[#f4f3ee] [&_svg]:w-[17px] [&_svg]:block fill-none stroke-[#4d6185]">
                            <button aria-label="Scroll history up"><svg viewBox="0 0 17 17"><rect x="1" y=".5" width="15" height="15" rx="2" fill="#c6d5fc" stroke="#9cb4ea" /><path d="M5 10l3.500-3.500L12 10" stroke-width="2.200" /></svg></button>
                            <svg class="mt-auto" viewBox="0 0 17 17"><rect x="1" y=".5" width="15" height="15" rx="2" fill="#c6d5fc" stroke="#9cb4ea" /><path d="M5 5.500h7M5 7.500h7M5 9.500h7M5 11.500h7" stroke="#8ba8e8" /></svg>
                            <button aria-label="Scroll history down"><svg viewBox="0 0 17 17"><rect x="1" y=".5" width="15" height="15" rx="2" fill="#c6d5fc" stroke="#9cb4ea" /><path d="M5 6.500L8.500 10 12 6.500" stroke-width="2.200" /></svg></button>
                        </div>
                    </div>
                    <div class="h-4 shrink-0 flex">
                        <input aria-label="Command line" class="flex-1 min-w-0 h-4 pl-px pt-px bg-white outline-none" value="Specify stretch point or [Base point/Copy/Undo/eXit]:">
                        <div class="w-[64px] mr-[18px] shrink-0 flex justify-between pl-[3px] bg-[#f4f3ee] [&_svg]:size-4 fill-none stroke-[#4d6185]">
                            <button aria-label="Scroll command left"><svg viewBox="0 0 17 17"><rect x="1" y=".5" width="15" height="15" rx="2" fill="#c6d5fc" stroke="#9cb4ea" /><path d="M10 4.500L6.500 8l3.500 3.500" stroke-width="2.200" /></svg></button>
                            <svg class="mr-2" viewBox="0 0 17 17"><rect x="1" y=".5" width="15" height="15" rx="2" fill="#c6d5fc" stroke="#9cb4ea" /><path d="M5.500 5v7M7.500 5v7M9.500 5v7M11.500 5v7" stroke="#8ba8e8" /></svg>
                            <button aria-label="Scroll command right"><svg viewBox="0 0 17 17"><rect x="1" y=".5" width="15" height="15" rx="2" fill="#c6d5fc" stroke="#9cb4ea" /><path d="M7 4.500L10.500 8 7 11.500" stroke-width="2.200" /></svg></button>
                        </div>
                    </div>
                </div>
            </section>

            <!-- status bar -->
            <footer class="h-[23px] shrink-0 flex items-center pt-[2px] pl-[5px] border-t border-[#aca899] overflow-hidden font-['Liberation_Sans',Arial,sans-serif] text-[11px] leading-[16px] whitespace-nowrap [&>button]:h-[17px] [&>button]:border [&>button]:shrink-0">
                <div class="w-[238px] h-[18px] shrink-0 mr-1 pl-[2px] border border-[#aca899] border-r-2">1080.0000, 400.0000, 0.0000</div>
                <button class="w-[33px] border-t-black border-l-black border-r-white border-b-white" aria-pressed="true">SNAP</button>
                <button class="w-[31px] ml-1 border-t-white border-l-white border-[#aca899]">GRID</button>
                <button class="w-[43px] ml-1 border-t-white border-l-white border-[#aca899]">ORTHO</button>
                <button class="w-[41px] ml-1 border-t-white border-l-white border-[#aca899]">POLAR</button>
                <button class="w-[41px] ml-1 border-t-white border-l-white border-[#aca899]">OSNAP</button>
                <button class="w-[49px] ml-1 border-t-black border-l-black border-r-white border-b-white" aria-pressed="true">OTRACK</button>
                <button class="w-[19px] ml-[2px] text-left border-t-white border-l-white border-[#ece9d8]">LW</button>
                <div class="w-[24px] h-[18px] shrink-0 grid place-items-center border border-[#aca899]">
                    <svg class="size-4" viewBox="0 0 16 16"><path d="M2 2l5-1 3 5-4 4-4-3z" fill="#a9c0dc" stroke="#3d5f86" /><path d="M4 8l-2 6h6" fill="none" stroke="#3d5f86" stroke-width="2" /><path d="M10 5l6 10.500H4.500z" fill="#ffd92e" stroke="#a07c08" /><path d="M10.200 8.500v3.500M10.200 13v1.500" stroke="#000" stroke-width="1.500" /></svg>
                </div>
                <svg class="w-2 h-4 ml-[5px]" viewBox="0 0 8 16"><path d="M0 9h8l-4 4z" /></svg>
            </footer>
        </div>
    </div>
</body>

</html>
